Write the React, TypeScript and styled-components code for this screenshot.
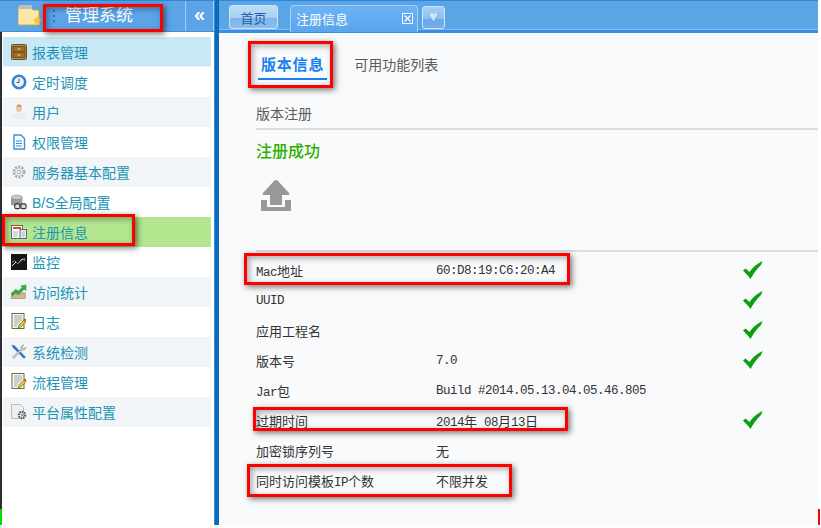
import React from 'react';
import styled, { createGlobalStyle } from 'styled-components';

const GlobalStyle = createGlobalStyle`
  html, body {
    margin: 0;
    padding: 0;
    background: #fff;
  }
`;

const Page = styled.div`
  position: relative;
  width: 821px;
  height: 528px;
  overflow: hidden;
  background: #fff;
  font-family: "Liberation Sans", "Noto Sans CJK SC", sans-serif;
`;

const Frame = styled.div`
  display: flex;
  width: 818px;
  height: 525px;
`;

const Sidebar = styled.aside`
  width: 214px;
  flex: none;
  display: flex;
  flex-direction: column;
  background: #fff;
`;

const SideHeader = styled.header`
  height: 32px;
  box-sizing: border-box;
  display: flex;
  align-items: center;
  background: #5ba5e6;
  border-top: 1px solid #2f86dc;
  border-bottom: 1px solid #3f8fe0;
`;

const Logo = styled.div`
  width: 48px;
  padding-left: 18px;
  box-sizing: border-box;
  display: flex;
  align-items: center;
  flex: none;
`;

const Dots = styled.div`
  width: 14px;
  flex: none;
  display: flex;
  flex-direction: column;
  align-items: center;
  gap: 3px;
  margin: 0 4px 0 -1px;

  span {
    width: 2px;
    height: 2px;
    background: #2a78c8;
  }
`;

const Title = styled.h1`
  margin: 0;
  flex: 1;
  font-size: 17px;
  font-weight: 400;
  line-height: 30px;
  color: #fff;
  white-space: nowrap;
`;

const Collapse = styled.div`
  width: 29px;
  height: 100%;
  flex: none;
  display: flex;
  align-items: center;
  justify-content: center;
  border-left: 1px solid #a5cdf2;
  border-right: 1px solid #a5cdf2;
  box-sizing: border-box;
`;

const Menu = styled.nav`
  flex: 1;
  display: flex;
  flex-direction: column;
  padding: 5px 3px 0 2px;
  border-left: 2px solid #2e2e2e;
  margin-bottom: 16px;
  position: relative;
`;

const MenuItem = styled.div<{ $tone: 'blue' | 'green' | 'grey' | 'plain' }>`
  height: 30px;
  box-sizing: border-box;
  width: 208px;
  margin-left: -1px;
  padding-left: 8px;
  display: flex;
  align-items: center;
  gap: 5px;
  font-size: 14px;
  color: #2094b4;
  border-bottom: 1px solid ${p => (p.$tone === 'blue' ? '#eef6fb' : 'transparent')};
  background: ${p =>
    p.$tone === 'blue' ? '#c9e8f6' : p.$tone === 'green' ? '#b3e68f' : p.$tone === 'grey' ? '#f1f5f8' : '#fff'};

  svg {
    flex: none;
  }
`;

const Splitter = styled.div`
  width: 5px;
  flex: none;
  background: #0f6ab6;
  border-left: 1px solid #2d8fe2;
  box-sizing: border-box;
`;

const Main = styled.main`
  flex: 1;
  min-width: 0;
  display: flex;
  flex-direction: column;
  background: #f9fafc;
`;

const TabBar = styled.div`
  height: 33px;
  flex: none;
  box-sizing: border-box;
  display: flex;
  align-items: flex-start;
  padding: 4px 0 0 10px;
  background: #5aa5e6;
  border-top: 1px solid #2f86dc;
  border-bottom: 3px solid #3a8ce2;
  box-shadow: inset 0 -1px 0 #86bdf0;
`;

const HomeTab = styled.div`
  width: 49px;
  height: 24px;
  box-sizing: border-box;
  display: flex;
  align-items: center;
  justify-content: center;
  border: 1px solid #cfe4f8;
  border-radius: 3px;
  background: linear-gradient(#bcdcf7 0%, #a8d0f3 55%, #7fb6ea 56%, #8abdee 100%);
  font-size: 13px;
  color: #1e62a8;
`;

const ActiveTab = styled.div`
  width: 128px;
  height: 27px;
  margin-left: 12px;
  padding: 0 4px 2px 5px;
  box-sizing: border-box;
  display: flex;
  align-items: center;
  justify-content: space-between;
  border: 1px solid #a7d0f5;
  border-bottom: none;
  border-radius: 4px 4px 0 0;
  background: linear-gradient(#6db3f4, #5aa5ec);
  font-size: 13px;
  color: #fff;
`;

const CloseBox = styled.span`
  width: 11px;
  height: 11px;
  box-sizing: border-box;
  display: flex;
  border: 1px solid #fff;
  background: #5aa5ec;
`;

const MoreTab = styled.div`
  width: 23px;
  height: 23px;
  margin: 1px 0 0 4px;
  box-sizing: border-box;
  display: flex;
  justify-content: center;
  padding-top: 6px;
  border: 1px solid #cfe4f8;
  border-radius: 3px;
  background: linear-gradient(#a5cff3 0%, #8fc1ef 55%, #6aa8e6 56%, #74aeea 100%);
`;

const Content = styled.section`
  flex: 1;
  padding: 16px 0 0 37px;
  display: flex;
  flex-direction: column;
`;

const InnerTabs = styled.div`
  display: flex;
  align-items: flex-start;
  gap: 24px;
  height: 55px;
  padding-left: 2px;
`;

const InnerTab = styled.div<{ $active?: boolean }>`
  height: 31px;
  box-sizing: border-box;
  padding: 6px 3px 0;
  font-size: ${p => (p.$active ? '15px' : '14px')};
  font-weight: ${p => (p.$active ? 700 : 400)};
  line-height: 20px;
  letter-spacing: ${p => (p.$active ? '0.8px' : '0')};
  color: ${p => (p.$active ? '#1a80f0' : '#5a5a5a')};
  border-bottom: ${p => (p.$active ? '2px solid #1a80f0' : 'none')};
`;

const SectionTitle = styled.div`
  height: 26px;
  box-sizing: border-box;
  font-size: 14px;
  line-height: 20px;
  color: #5a5a5a;
  border-bottom: 2px solid #dedede;
`;

const Success = styled.div`
  margin-top: 12px;
  font-size: 16px;
  line-height: 20px;
  font-weight: 500;
  color: #2cb000;
`;

const UploadArea = styled.div`
  height: 90px;
  padding: 18px 0 0 5px;
  box-sizing: border-box;
  border-bottom: 2px solid #dedede;
`;

const InfoList = styled.div`
  display: flex;
  flex-direction: column;
  padding-top: 3px;
`;

const InfoRow = styled.div`
  height: 30px;
  display: grid;
  grid-template-columns: 180px 307px 20px;
  align-items: center;
  font-size: 13px;
  color: #333;
  white-space: nowrap;
`;

const Latin = styled.span`
  font-family: "Liberation Mono", monospace;
  font-size: 12.5px;
  letter-spacing: -0.5px;
`;

const Annotation = styled.div<{ $x: number; $y: number; $w: number; $h: number }>`
  position: absolute;
  left: ${p => p.$x}px;
  top: ${p => p.$y}px;
  width: ${p => p.$w}px;
  height: ${p => p.$h}px;
  box-sizing: border-box;
  border: 3px solid #f00;
  box-shadow: 2px 2px 6px rgba(0, 0, 0, 0.55), inset 2px 2px 6px rgba(0, 0, 0, 0.35);
  pointer-events: none;
`;

const CornerMark = styled.div<{ $color: string; $x: number; $w: number }>`
  position: absolute;
  left: ${p => p.$x}px;
  top: 509px;
  width: ${p => p.$w}px;
  height: 16px;
  background: ${p => p.$color};
`;

const FolderIcon = () => (
  <svg width="24" height="24" viewBox="0 0 24 24">
    <path d="M0 3h13l2 3h6v15H0z" fill="#fbe7a6" stroke="#c9a552" />
    <rect x="1" y="1" width="13" height="4" fill="#bdbdbd" />
    <path d="M19 12l1.400 3 3.200.4-2.400 2.200.7 3.200-2.900-1.700-2.900 1.700.7-3.200-2.400-2.200 3.200-.4z" fill="#f5c53a" />
  </svg>
);

const DrawerIcon = () => (
  <svg width="16" height="16" viewBox="0 0 16 16">
    <rect x="0.5" y="0.5" width="15" height="15" rx="1" fill="#a8904f" stroke="#5f5a2c" />
    <rect x="2" y="2.5" width="12" height="5" fill="#a56a22" stroke="#5c3d14" strokeWidth="0.6" />
    <rect x="2" y="8.5" width="12" height="5" fill="#a56a22" stroke="#5c3d14" strokeWidth="0.6" />
    <rect x="6.5" y="4.5" width="3" height="1" fill="#f0d890" />
    <rect x="6.5" y="10.5" width="3" height="1" fill="#f0d890" />
  </svg>
);

const ClockIcon = () => (
  <svg width="16" height="16" viewBox="0 0 16 16">
    <circle cx="8" cy="8" r="6.2" fill="#f2f2f2" stroke="#2f86d8" strokeWidth="2.6" />
    <path d="M8 4.5V8.5H5.5" fill="none" stroke="#555" strokeWidth="1" />
  </svg>
);

const UserIcon = () => (
  <svg width="16" height="17" viewBox="0 0 16 17">
    <ellipse cx="8" cy="5" rx="3" ry="4" fill="#e8c6a4" />
    <path d="M5.5 3.5Q8 0 10.5 3.5z" fill="#b89068" />
    <path d="M1 16q0-5 5-6h4q5 1 5 6z" fill="#ececec" />
  </svg>
);

const DocIcon = () => (
  <svg width="16" height="16" viewBox="0 0 16 16">
    <path d="M3 1h7l3.500 3.500V15H3z" fill="#fff" stroke="#3b8fd6" strokeWidth="1.4" />
    <path d="M5 7h6M5 9.500h6M5 12h6" stroke="#3b8fd6" strokeWidth="1.2" />
  </svg>
);

const GearIcon = () => (
  <svg width="16" height="16" viewBox="0 0 16 16">
    <circle cx="8" cy="8" r="5.2" fill="none" stroke="#a8a8a8" strokeWidth="2.4" strokeDasharray="2 1.3" />
    <circle cx="8" cy="8" r="4" fill="none" stroke="#c4c4c4" strokeWidth="0.8" />
    <circle cx="8" cy="8" r="1.8" fill="none" stroke="#a8a8a8" />
  </svg>
);

const DatabaseIcon = () => (
  <svg width="16" height="16" viewBox="0 0 17 16">
    <path d="M0 3v8q6 3 12 0V3z" fill="#9a9a9a" />
    <ellipse cx="6" cy="3" rx="6" ry="2.4" fill="#c8c8c8" stroke="#777" strokeWidth="0.5" />
    <rect x="4" y="10" width="5.5" height="5" rx="1.5" fill="#ddd" stroke="#333" strokeWidth="1.2" />
    <rect x="10.5" y="10" width="5.5" height="5" rx="1.5" fill="#ddd" stroke="#333" strokeWidth="1.2" />
    <path d="M9.5 12.5h1" stroke="#333" />
  </svg>
);

const RegisterIcon = () => (
  <svg width="16" height="16" viewBox="0 0 16 16">
    <rect x="0.5" y="1.500" width="11" height="13" fill="#fff" stroke="#666" />
    <rect x="2" y="3" width="8" height="2" fill="#e8482c" />
    <rect x="9" y="5.500" width="6.500" height="9" fill="#eef3f7" stroke="#666" />
    <path d="M2 8h5M2 10h5M2 12h5M10.500 8h3.500M10.500 10h3.500M10.500 12h3.500" stroke="#9ab6cc" />
  </svg>
);

const MonitorIcon = () => (
  <svg width="16" height="16" viewBox="0 0 16 16">
    <rect width="16" height="16" fill="#161616" />
    <path d="M1 12l4-4 2 2 4-5 3 1" fill="none" stroke="#e8e8e8" />
    <path d="M1 8l3-1 3 3 3-3 4-3" fill="none" stroke="#777" />
  </svg>
);

const StatsIcon = () => (
  <svg width="16" height="16" viewBox="0 0 17 16">
    <rect x="0" y="9" width="15" height="6" fill="#cdb893" stroke="#8d7a58" strokeWidth="0.6" />
    <path d="M0 10l5-5 3 2 4-4-2-1.500 6-1v6L14 5 8 11 5 9l-3 3z" fill="#2fae3c" stroke="#1c8a2a" strokeWidth="0.4" />
  </svg>
);

const NoteIcon = () => (
  <svg width="16" height="17" viewBox="0 0 16 17">
    <rect x="1" y="0.500" width="12" height="15" fill="#f8f8f2" stroke="#4a7a42" />
    <path d="M3 3h8M3 5h8M3 7h8M3 9h6M3 11h4M3 13h3" stroke="#8a8a8a" strokeWidth="0.8" />
    <path d="M7 15l1-3 5-5 2 2-5 5z" fill="#e8c030" stroke="#5a4a10" strokeWidth="0.5" />
    <circle cx="14" cy="7" r="1.2" fill="#e8443c" />
  </svg>
);

const ToolsIcon = () => (
  <svg width="16" height="16" viewBox="0 0 16 16">
    <path d="M1 1l2.500.8L14.500 13l-1.500 1.500L2 3.500z" fill="#2f78c8" stroke="#1d5aa0" strokeWidth="0.4" />
    <path d="M15 3a3 3 0 0 1-4 3L3 14.500 1.500 13 10 5a3 3 0 0 1 3-4l-2 2 2 2z" fill="#cfcfcf" stroke="#888" strokeWidth="0.5" />
  </svg>
);

const PageGearIcon = () => (
  <svg width="16" height="16" viewBox="0 0 16 16">
    <path d="M0.500 0.500h9l3 3v11h-12z" fill="#efefef" stroke="#bbb" />
    <circle cx="11" cy="11" r="3.2" fill="none" stroke="#555" strokeWidth="2.2" strokeDasharray="1.5 0.9" />
    <circle cx="11" cy="11" r="1.3" fill="#999" />
  </svg>
);

const UploadIcon = () => (
  <svg width="30" height="31" viewBox="0 0 30 31">
    <path d="M15 0q1 0 2 1l11 12q1 2-1 2h-6v10H9V15H3q-2 0-1-2L13 1q1-1 2-1z" fill="#999" />
    <path d="M0 20h6v7h18v-7h6v11H0z" fill="#999" />
  </svg>
);

const CheckIcon = () => (
  <svg width="20" height="18" viewBox="0 0 20 18">
    <path d="M0 9.500l2.500-2 4 3.500C9.500 6.500 14 2.500 19.500 0 19 2 18.500 2.500 18 4 14 7.500 10.500 12.500 7.500 18 5 14.500 2.500 12 0 9.500z" fill="#0aa010" />
  </svg>
);

const menu: { label: React.ReactNode; icon: React.ReactNode; tone: 'blue' | 'green' | 'grey' | 'plain' }[] = [
  { label: '报表管理', icon: <DrawerIcon />, tone: 'blue' },
  { label: '定时调度', icon: <ClockIcon />, tone: 'plain' },
  { label: '用户', icon: <UserIcon />, tone: 'grey' },
  { label: '权限管理', icon: <DocIcon />, tone: 'plain' },
  { label: '服务器基本配置', icon: <GearIcon />, tone: 'grey' },
  { label: 'B/S全局配置', icon: <DatabaseIcon />, tone: 'plain' },
  { label: '注册信息', icon: <RegisterIcon />, tone: 'green' },
  { label: '监控', icon: <MonitorIcon />, tone: 'plain' },
  { label: '访问统计', icon: <StatsIcon />, tone: 'grey' },
  { label: '日志', icon: <NoteIcon />, tone: 'plain' },
  { label: '系统检测', icon: <ToolsIcon />, tone: 'grey' },
  { label: '流程管理', icon: <NoteIcon />, tone: 'plain' },
  { label: '平台属性配置', icon: <PageGearIcon />, tone: 'grey' },
];

const rows: { name: React.ReactNode; value?: React.ReactNode; ok?: boolean }[] = [
  { name: <><Latin>Mac</Latin>地址</>, value: <Latin>60:D8:19:C6:20:A4</Latin>, ok: true },
  { name: <Latin>UUID</Latin>, ok: true },
  { name: '应用工程名', ok: true },
  { name: '版本号', value: <Latin>7.0</Latin>, ok: true },
  { name: <><Latin>Jar</Latin>包</>, value: <Latin>Build #2014.05.13.04.05.46.805</Latin> },
  {
    name: '过期时间',
    value: <><Latin>2014</Latin>年<Latin> 08</Latin>月<Latin>13</Latin>日</>,
    ok: true,
  },
  { name: '加密锁序列号', value: '无' },
  { name: <>同时访问模板<Latin>IP</Latin>个数</>, value: '不限并发' },
];

const App: React.FC = () => {
  return (
    <Page>
      <GlobalStyle />
      <Frame>
        <Sidebar>
          <SideHeader>
            <Logo>
              <FolderIcon />
            </Logo>
            <Dots>
              <span />
              <span />
              <span />
            </Dots>
            <Title>管理系统</Title>
            <Collapse>
              <svg width="10" height="8" viewBox="0 0 12 10">
                <path d="M5 0L1 5l4 5M10.500 0l-4 5 4 5" fill="none" stroke="#fff" strokeWidth="2.600" />
              </svg>
            </Collapse>
          </SideHeader>
          <Menu>
            {menu.map((item, i) => (
              <MenuItem key={i} $tone={item.tone}>
                {item.icon}
                <span>{item.label}</span>
              </MenuItem>
            ))}
          </Menu>
        </Sidebar>
        <Splitter />
        <Main>
          <TabBar>
            <HomeTab>首页</HomeTab>
            <ActiveTab>
              注册信息
              <CloseBox>
                <svg width="9" height="9" viewBox="0 0 9 9">
                  <path d="M1.500 1.500l6 6M7.500 1.500l-6 6" stroke="#fff" strokeWidth="1.300" />
                </svg>
              </CloseBox>
            </ActiveTab>
            <MoreTab>
              <svg width="11" height="9" viewBox="0 0 11 9">
                <path d="M0 0h11L5.500 9z" fill="#cdeafc" stroke="#4a90d8" strokeWidth="0.500" />
              </svg>
            </MoreTab>
          </TabBar>
          <Content>
            <InnerTabs>
              <InnerTab $active>版本信息</InnerTab>
              <InnerTab>可用功能列表</InnerTab>
            </InnerTabs>
            <SectionTitle>版本注册</SectionTitle>
            <Success>注册成功</Success>
            <UploadArea>
              <UploadIcon />
            </UploadArea>
            <InfoList>
              {rows.map((row, i) => (
                <InfoRow key={i}>
                  <span>{row.name}</span>
                  <span>{row.value}</span>
                  {row.ok ? <CheckIcon /> : <span />}
                </InfoRow>
              ))}
            </InfoList>
          </Content>
        </Main>
      </Frame>
      <Annotation $x={43} $y={4} $w={120} $h={28} />
      <Annotation $x={248} $y={41} $w={85} $h={47} />
      <Annotation $x={2} $y={214} $w={133} $h={32} />
      <Annotation $x={244} $y={253} $w={326} $h={32} />
      <Annotation $x={253} $y={407} $w={315} $h={24} />
      <Annotation $x={247} $y={464} $w={265} $h={33} />
      <CornerMark $color="#00e000" $x={0} $w={2} />
      <CornerMark $color="#f00" $x={818} $w={2} />
    </Page>
  );
};

export default App;
